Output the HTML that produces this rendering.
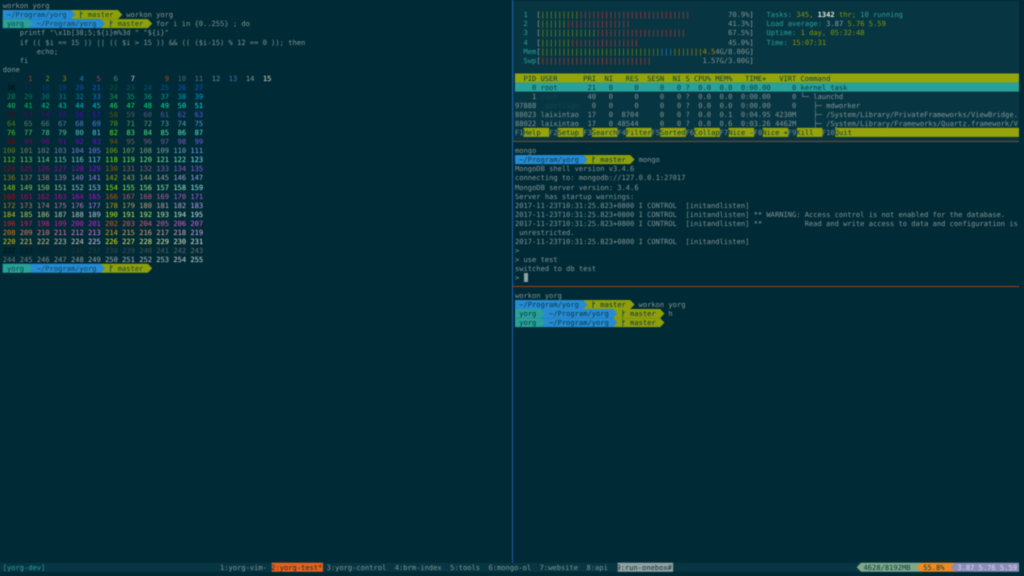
<!DOCTYPE html>
<html><head><meta charset="utf-8"><title>tmux</title>
<style>
html,body{margin:0;padding:0;width:1024px;height:576px;overflow:hidden;background:#002b36}
#w{position:absolute;left:0;top:0;width:1024px;height:576px;filter:blur(.42px)}
svg{position:absolute;left:0;top:0}
pre{position:absolute;margin:0;font-family:"DejaVu Sans Mono","Liberation Mono",monospace;font-size:7.09px;line-height:9.06px;color:#839496;white-space:pre;text-rendering:geometricPrecision;font-kerning:none}
i{font-style:normal}
#L i{opacity:.9}
.d{color:#073642}.o{color:#859900}.r{color:#dc322f}.t{color:#2aa198}.y{color:#b58900}.b{color:#268bd2}.w{color:#eee8d5;font-weight:bold}.l{color:#93a1a1}.n{color:#0c4554}
</style></head><body><div id="w">
<svg width="1024" height="576" viewBox="0 0 1024 576">
<rect x="513" y="1" width="506" height="140" fill="#073642"/>
<rect x="512" y="0" width="1" height="563" fill="#1f62ad"/>
<rect x="513" y="141" width="506" height="1" fill="#7a4a33"/>
<rect x="513" y="286" width="506" height="1" fill="#a5401f"/>
<rect x="515" y="73.48" width="504" height="9.06" fill="#96a40c"/>
<rect x="515" y="82.54" width="504" height="9.06" fill="#2aa198"/>
<g fill="#96a40c">
<rect x="523.54" y="127.84" width="25.62" height="9.06"/>
<rect x="557.7" y="127.84" width="25.62" height="9.06"/>
<rect x="591.86" y="127.84" width="25.62" height="9.06"/>
<rect x="626.02" y="127.84" width="25.62" height="9.06"/>
<rect x="660.18" y="127.84" width="25.62" height="9.06"/>
<rect x="694.34" y="127.84" width="25.62" height="9.06"/>
<rect x="728.5" y="127.84" width="25.62" height="9.06"/>
<rect x="762.66" y="127.84" width="25.62" height="9.06"/>
<rect x="796.82" y="127.84" width="25.62" height="9.06"/>
<rect x="835.25" y="127.84" width="183.75" height="9.06"/>
</g>
<defs>
<g id="pa">
<polygon fill="#8f9f0a" points="68.32,0 115.3,0 119.57,4.53 115.3,9.06 68.32,9.06"/>
<polygon fill="#268bd2" points="0,0 68.32,0 72.59,4.53 68.32,9.06 0,9.06"/>
<path d="M77.9 1v7.2M77.9 5.4q0-2.2 2.4-2.6" fill="none" stroke="#0a4a5a" stroke-width=".8"/>
</g>
<g id="pb">
<polygon fill="#8f9f0a" points="98.21,0 145.18,0 149.45,4.53 145.18,9.06 98.21,9.06"/>
<polygon fill="#268bd2" points="25.62,0 98.21,0 102.48,4.53 98.21,9.06 25.62,9.06"/>
<polygon fill="#2aa198" points="0,0 25.62,0 29.89,4.53 25.62,9.06 0,9.06"/>
<path d="M107.8 1v7.2M107.8 5.4q0-2.2 2.4-2.6" fill="none" stroke="#0a4a5a" stroke-width=".8"/>
</g>
</defs>
<use href="#pa" x="2.7" y="10.06"/>
<use href="#pb" x="2.7" y="19.12"/>
<use href="#pb" x="2.7" y="263.74"/>
<use href="#pa" x="515" y="155.02"/>
<use href="#pa" x="515" y="299.98"/>
<use href="#pb" x="515" y="309.04"/>
<use href="#pb" x="515" y="318.1"/>
<rect x="0" y="562.72" width="1019" height="9.06" fill="#073642"/>
<rect x="271.7" y="562.72" width="51.24" height="9.06" fill="#e8601c"/>
<rect x="617.6" y="562.72" width="55.5" height="9.06" fill="#93a1a1"/>
<polygon fill="#7fa98a" points="856.7,567.25 860.97,562.72 920.8,562.72 920.8,571.78 860.97,571.78"/>
<polygon fill="#ee8a22" points="916.5,567.25 920.8,562.72 954.9,562.72 954.9,571.78 920.8,571.78"/>
<polygon fill="#8c8cb8" points="950.6,567.25 954.9,562.72 1019,562.72 1019,571.78 954.9,571.78"/>
</svg>

<pre id="L" style="left:2.7px;top:1.3px">workon yorg
<i class="d"> ~/Program/yorg     master   </i>workon yorg
<i class="d"> yorg   ~/Program/yorg     master   </i>for i in {0..255} ; do
    printf "\x1b[38;5;${i}m%3d " "${i}"
    if (( $i == 15 )) || (( $i &gt; 15 )) &amp;&amp; (( ($i-15) % 12 == 0 )); then
        echo;
    fi
done
  <i style="color:#073642">0</i>   <i style="color:#dc322f">1</i>   <i style="color:#859900">2</i>   <i style="color:#b58900">3</i>   <i style="color:#268bd2">4</i>   <i style="color:#d33682">5</i>   <i style="color:#2aa198">6</i>   <i style="color:#eee8d5">7</i>   <i style="color:#002b36">8</i>   <i style="color:#cb4b16">9</i>  <i style="color:#586e75">10</i>  <i style="color:#657b83">11</i>  <i style="color:#839496">12</i>  <i style="color:#6c71c4">13</i>  <i style="color:#93a1a1">14</i>  <i style="color:#fdf6e3">15</i>
 <i style="color:#000000">16</i>  <i style="color:#0a2a6a">17</i>  <i style="color:#0a3a8a">18</i>  <i style="color:#0a46a8">19</i>  <i style="color:#1056c8">20</i>  <i style="color:#1a62e8">21</i>  <i style="color:#0f5f30">22</i>  <i style="color:#005f5f">23</i>  <i style="color:#005f87">24</i>  <i style="color:#005faf">25</i>  <i style="color:#005fd7">26</i>  <i style="color:#005fff">27</i>
 <i style="color:#1f8758">28</i>  <i style="color:#00875f">29</i>  <i style="color:#008787">30</i>  <i style="color:#0087af">31</i>  <i style="color:#0087d7">32</i>  <i style="color:#0087ff">33</i>  <i style="color:#26a850">34</i>  <i style="color:#00af5f">35</i>  <i style="color:#00af87">36</i>  <i style="color:#00afaf">37</i>  <i style="color:#00afd7">38</i>  <i style="color:#00afff">39</i>
 <i style="color:#2ccc60">40</i>  <i style="color:#00d75f">41</i>  <i style="color:#00d787">42</i>  <i style="color:#00d7af">43</i>  <i style="color:#00d7d7">44</i>  <i style="color:#00d7ff">45</i>  <i style="color:#38e868">46</i>  <i style="color:#00ff5f">47</i>  <i style="color:#00ff87">48</i>  <i style="color:#00ffaf">49</i>  <i style="color:#00ffd7">50</i>  <i style="color:#00ffff">51</i>
 <i style="color:#5f0000">52</i>  <i style="color:#5f005f">53</i>  <i style="color:#5f0087">54</i>  <i style="color:#5f00af">55</i>  <i style="color:#5f00d7">56</i>  <i style="color:#5f00ff">57</i>  <i style="color:#5f5f00">58</i>  <i style="color:#5f5f5f">59</i>  <i style="color:#5f5f87">60</i>  <i style="color:#5f5faf">61</i>  <i style="color:#5f5fd7">62</i>  <i style="color:#5f5fff">63</i>
 <i style="color:#5f8700">64</i>  <i style="color:#5f875f">65</i>  <i style="color:#5f8787">66</i>  <i style="color:#5f87af">67</i>  <i style="color:#5f87d7">68</i>  <i style="color:#5f87ff">69</i>  <i style="color:#5faf00">70</i>  <i style="color:#5faf5f">71</i>  <i style="color:#5faf87">72</i>  <i style="color:#5fafaf">73</i>  <i style="color:#5fafd7">74</i>  <i style="color:#5fafff">75</i>
 <i style="color:#5fd700">76</i>  <i style="color:#5fd75f">77</i>  <i style="color:#5fd787">78</i>  <i style="color:#5fd7af">79</i>  <i style="color:#5fd7d7">80</i>  <i style="color:#5fd7ff">81</i>  <i style="color:#5fff00">82</i>  <i style="color:#5fff5f">83</i>  <i style="color:#5fff87">84</i>  <i style="color:#5fffaf">85</i>  <i style="color:#5fffd7">86</i>  <i style="color:#5fffff">87</i>
 <i style="color:#870000">88</i>  <i style="color:#87005f">89</i>  <i style="color:#870087">90</i>  <i style="color:#8700af">91</i>  <i style="color:#8700d7">92</i>  <i style="color:#8700ff">93</i>  <i style="color:#875f00">94</i>  <i style="color:#875f5f">95</i>  <i style="color:#875f87">96</i>  <i style="color:#875faf">97</i>  <i style="color:#875fd7">98</i>  <i style="color:#875fff">99</i>
<i style="color:#878700">100</i> <i style="color:#87875f">101</i> <i style="color:#878787">102</i> <i style="color:#8787af">103</i> <i style="color:#8787d7">104</i> <i style="color:#8787ff">105</i> <i style="color:#87af00">106</i> <i style="color:#87af5f">107</i> <i style="color:#87af87">108</i> <i style="color:#87afaf">109</i> <i style="color:#87afd7">110</i> <i style="color:#87afff">111</i>
<i style="color:#87d700">112</i> <i style="color:#87d75f">113</i> <i style="color:#87d787">114</i> <i style="color:#87d7af">115</i> <i style="color:#87d7d7">116</i> <i style="color:#87d7ff">117</i> <i style="color:#87ff00">118</i> <i style="color:#87ff5f">119</i> <i style="color:#87ff87">120</i> <i style="color:#87ffaf">121</i> <i style="color:#87ffd7">122</i> <i style="color:#87ffff">123</i>
<i style="color:#af0000">124</i> <i style="color:#af005f">125</i> <i style="color:#af0087">126</i> <i style="color:#af00af">127</i> <i style="color:#af00d7">128</i> <i style="color:#af00ff">129</i> <i style="color:#af5f00">130</i> <i style="color:#af5f5f">131</i> <i style="color:#af5f87">132</i> <i style="color:#af5faf">133</i> <i style="color:#af5fd7">134</i> <i style="color:#af5fff">135</i>
<i style="color:#af8700">136</i> <i style="color:#af875f">137</i> <i style="color:#af8787">138</i> <i style="color:#af87af">139</i> <i style="color:#af87d7">140</i> <i style="color:#af87ff">141</i> <i style="color:#afaf00">142</i> <i style="color:#afaf5f">143</i> <i style="color:#afaf87">144</i> <i style="color:#afafaf">145</i> <i style="color:#afafd7">146</i> <i style="color:#afafff">147</i>
<i style="color:#afd700">148</i> <i style="color:#afd75f">149</i> <i style="color:#afd787">150</i> <i style="color:#afd7af">151</i> <i style="color:#afd7d7">152</i> <i style="color:#afd7ff">153</i> <i style="color:#afff00">154</i> <i style="color:#afff5f">155</i> <i style="color:#afff87">156</i> <i style="color:#afffaf">157</i> <i style="color:#afffd7">158</i> <i style="color:#afffff">159</i>
<i style="color:#d70000">160</i> <i style="color:#d7005f">161</i> <i style="color:#d70087">162</i> <i style="color:#d700af">163</i> <i style="color:#d700d7">164</i> <i style="color:#d700ff">165</i> <i style="color:#d75f00">166</i> <i style="color:#d75f5f">167</i> <i style="color:#d75f87">168</i> <i style="color:#d75faf">169</i> <i style="color:#d75fd7">170</i> <i style="color:#d75fff">171</i>
<i style="color:#d78700">172</i> <i style="color:#d7875f">173</i> <i style="color:#d78787">174</i> <i style="color:#d787af">175</i> <i style="color:#d787d7">176</i> <i style="color:#d787ff">177</i> <i style="color:#d7af00">178</i> <i style="color:#d7af5f">179</i> <i style="color:#d7af87">180</i> <i style="color:#d7afaf">181</i> <i style="color:#d7afd7">182</i> <i style="color:#d7afff">183</i>
<i style="color:#d7d700">184</i> <i style="color:#d7d75f">185</i> <i style="color:#d7d787">186</i> <i style="color:#d7d7af">187</i> <i style="color:#d7d7d7">188</i> <i style="color:#d7d7ff">189</i> <i style="color:#d7ff00">190</i> <i style="color:#d7ff5f">191</i> <i style="color:#d7ff87">192</i> <i style="color:#d7ffaf">193</i> <i style="color:#d7ffd7">194</i> <i style="color:#d7ffff">195</i>
<i style="color:#ee2222">196</i> <i style="color:#ee1f66">197</i> <i style="color:#ee1f8c">198</i> <i style="color:#ee1fb0">199</i> <i style="color:#ee1fd7">200</i> <i style="color:#ee1fff">201</i> <i style="color:#f0601a">202</i> <i style="color:#ff5f5f">203</i> <i style="color:#ff5f87">204</i> <i style="color:#ff5faf">205</i> <i style="color:#ff5fd7">206</i> <i style="color:#ff5fff">207</i>
<i style="color:#ff8700">208</i> <i style="color:#ff875f">209</i> <i style="color:#ff8787">210</i> <i style="color:#ff87af">211</i> <i style="color:#ff87d7">212</i> <i style="color:#ff87ff">213</i> <i style="color:#ffaf00">214</i> <i style="color:#ffaf5f">215</i> <i style="color:#ffaf87">216</i> <i style="color:#ffafaf">217</i> <i style="color:#ffafd7">218</i> <i style="color:#ffafff">219</i>
<i style="color:#ffd700">220</i> <i style="color:#ffd75f">221</i> <i style="color:#ffd787">222</i> <i style="color:#ffd7af">223</i> <i style="color:#ffd7d7">224</i> <i style="color:#ffd7ff">225</i> <i style="color:#ffff00">226</i> <i style="color:#ffff5f">227</i> <i style="color:#ffff87">228</i> <i style="color:#ffffaf">229</i> <i style="color:#ffffd7">230</i> <i style="color:#ffffff">231</i>
<i style="color:#080808">232</i> <i style="color:#121212">233</i> <i style="color:#1c1c1c">234</i> <i style="color:#262626">235</i> <i style="color:#303030">236</i> <i style="color:#3a3a3a">237</i> <i style="color:#444444">238</i> <i style="color:#4e4e4e">239</i> <i style="color:#585858">240</i> <i style="color:#626262">241</i> <i style="color:#6c6c6c">242</i> <i style="color:#767676">243</i>
<i style="color:#808080">244</i> <i style="color:#8a8a8a">245</i> <i style="color:#949494">246</i> <i style="color:#9e9e9e">247</i> <i style="color:#a8a8a8">248</i> <i style="color:#b2b2b2">249</i> <i style="color:#bcbcbc">250</i> <i style="color:#c6c6c6">251</i> <i style="color:#d0d0d0">252</i> <i style="color:#dadada">253</i> <i style="color:#e4e4e4">254</i> <i style="color:#eeeeee">255</i>
<i class="d"> yorg   ~/Program/yorg     master</i></pre>

<pre style="left:515px;top:1.3px">

  <i class="t">1</i>  <i class="l">[</i><i class="o">|||||||||</i><i class="r">||||||||||||||||||||||||||</i>         70.9%<i class="l">]</i>   <i class="t">Tasks: </i><i class="o">345,</i> <i class="w">1342</i> <i class="o">thr;</i> <i class="t">10 running</i>
  <i class="t">2</i>  <i class="l">[</i><i class="o">||||||</i><i class="r">|||||||||||||||</i>                       41.3%<i class="l">]</i>   <i class="t">Load average: </i><i class="l">3.87</i> <i class="o">5.76</i> <i class="o">5.59</i>
  <i class="t">3</i>  <i class="l">[</i><i class="o">|||||||||||||</i><i class="r">|||||||||||||||||||||</i>          67.5%<i class="l">]</i>   <i class="t">Uptime: </i><i class="o">1 day, 05:32:48</i>
  <i class="t">4</i>  <i class="l">[</i><i class="o">|||||||</i><i class="r">||||||||||||||||</i>                     45.0%<i class="l">]</i>   <i class="t">Time: </i><i class="o">15:07:31</i>
  <i class="t">Mem</i><i class="l">[</i><i class="o">||||||||||||||||||||||||||||</i><i class="b">|||</i><i class="y">|||||||</i><i class="y">4.5</i>4G/8.00G<i class="l">]</i>
  <i class="t">Swp</i><i class="l">[</i><i class="r">||||||||||||||||||||||||||</i>            1.57G/3.00G<i class="l">]</i>

<i class="d">  PID USER      PRI  NI   RES  SESN  NI S CPU% MEM%   TIME+   VIRT Command</i>
<i class="d">    0 root       21   0     0     0   0 ?  0.0  0.0  0:00.00     0 kernel_task</i>
    1 <i class="n">root</i>       40   0     0     0   0 ?  0.0  0.0  0:00.00     0 └─ launchd
97888 <i class="n">_spotligh</i>   0   0     0     0   0 ?  0.0  0.0  0:00.00     0    ├─ mdworker
88023 laixintao  17   0  8704     0   0 ?  0.0  0.1  0:04.95 4230M    ├─ /System/Library/PrivateFrameworks/ViewBridge.
88022 laixintao  17   0 48544     0   0 ?  0.0  0.6  0:03.26 4462M    ├─ /System/Library/Frameworks/Quartz.framework/V
F1<i class="d">Help  </i>F2<i class="d">Setup </i>F3<i class="d">Search</i>F4<i class="d">Filter</i>F5<i class="d">Sorted</i>F6<i class="d">Collap</i>F7<i class="d">Nice -</i>F8<i class="d">Nice +</i>F9<i class="d">Kill  </i>F10<i class="d">Quit</i>

mongo
<i class="d"> ~/Program/yorg     master   </i>mongo
MongoDB shell version v3.4.6
connecting to: mongodb://127.0.0.1:27017
MongoDB server version: 3.4.6
Server has startup warnings:
2017-11-23T10:31:25.823+0800 I CONTROL  [initandlisten]
2017-11-23T10:31:25.823+0800 I CONTROL  [initandlisten] ** WARNING: Access control is not enabled for the database.
2017-11-23T10:31:25.823+0800 I CONTROL  [initandlisten] **          Read and write access to data and configuration is
 unrestricted.
2017-11-23T10:31:25.823+0800 I CONTROL  [initandlisten]
&gt;
&gt; use test
switched to db test
&gt; <i style="background:#93a1a1;color:#93a1a1"> </i>

workon yorg
<i class="d"> ~/Program/yorg     master   </i>workon yorg
<i class="d"> yorg   ~/Program/yorg     master   </i>h
<i class="d"> yorg   ~/Program/yorg     master</i></pre>

<pre style="left:2.7px;top:562.72px"><i class="t">[yorg-dev]</i>                                         1:yorg-vim- <i class="d">2:yorg-test*</i> 3:yorg-control  4:brm-index  5:tools  6:mongo-ol  7:website  8:api  <i class="d">9:run-onebox#</i>                                             <i class="d">4628/8192MB</i>   <i class="d">55.8%</i>   <i style="color:#d8d8ea">3.87 5.76 5.59</i></pre>
</div></body></html>
